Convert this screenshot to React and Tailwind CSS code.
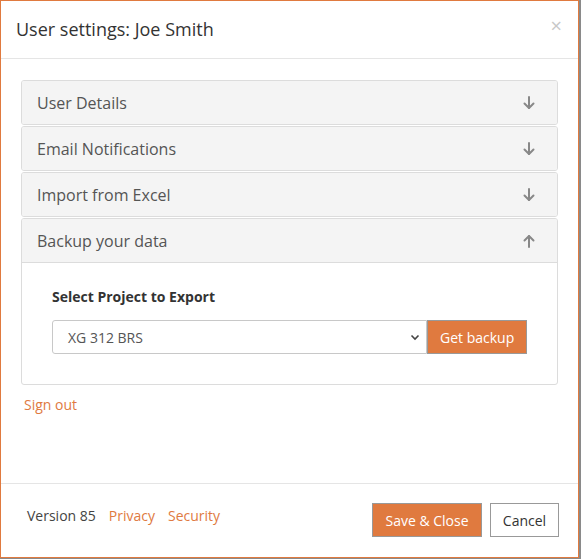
import React from "react";

function Arrow({ up }) {
  return (
    <svg width="14" height="16" viewBox="0 0 14 16" fill="none" stroke="#888" strokeWidth="2" strokeLinecap="round" strokeLinejoin="round">
      {up ? (
        <>
          <path d="M7 14V3" />
          <path d="M2.5 7.5L7 3l4.5 4.5" />
        </>
      ) : (
        <>
          <path d="M7 2v11" />
          <path d="M2.5 8.5L7 13l4.5-4.5" />
        </>
      )}
    </svg>
  );
}

function Item({ title, up, children }) {
  return (
    <div className="border border-[#dcdcdc] rounded-[3px] bg-white overflow-hidden">
      <div className="h-[43px] bg-[#f4f4f4] flex items-center justify-between pl-[15px] pr-[21px] text-[16px] text-[#555]">
        <span>{title}</span>
        <Arrow up={up} />
      </div>
      {children}
    </div>
  );
}

export default function App() {
  return (
    <div className="w-[581px] h-[559px] bg-[#8a8a8a]" style={{ fontFamily: '"Open Sans", sans-serif' }}>
      <div className="w-[579px] h-[558px] bg-white border border-[#e07a3f] flex flex-col">
        <div className="h-[58px] border-b border-[#e5e5e5] flex items-center justify-between pl-[15px] pr-[16px] shrink-0">
          <span className="text-[18px] text-[#333]">User settings: Joe Smith</span>
          <span className="text-[20px] text-[#c8c8c8] leading-none -mt-[8px]">×</span>
        </div>
        <div className="px-[20px] pt-[21px] flex-1">
          <div className="flex flex-col gap-[1px]">
            <Item title="User Details" />
            <Item title="Email Notifications" />
            <Item title="Import from Excel" />
            <Item title="Backup your data" up>
              <div className="border-t border-[#dcdcdc] px-[30px] pt-[23px] pb-[30px]">
                <div className="text-[14px] font-bold text-[#333] mb-[13px]">Select Project to Export</div>
                <div className="flex">
                  <div className="w-[376px] h-[34px] border border-[#c8c8c8] rounded-l-[3px] flex items-center justify-between pl-[15px] pr-[6px] text-[14px] text-[#555]">
                    <span>XG 312 BRS</span>
                    <svg width="10" height="8" viewBox="0 0 10 8" fill="none" stroke="#444" strokeWidth="1.6">
                      <path d="M1.5 2.5L5 6l3.5-3.5" />
                    </svg>
                  </div>
                  <div className="w-[100px] h-[34px] bg-[#e07a3f] border border-[#999] flex items-center justify-center text-[14px] text-white">
                    Get backup
                  </div>
                </div>
              </div>
            </Item>
          </div>
          <div className="mt-[9px] pl-[3px] text-[14px] text-[#e07a3f]">Sign out</div>
        </div>
        <div className="h-[74px] border-t border-[#e5e5e5] flex items-start justify-between pl-[26px] pr-[19px] pt-[19px] shrink-0">
          <div className="flex gap-[13px] text-[14px] pt-[2px]">
            <span className="text-[#444]">Version 85</span>
            <span className="text-[#e07a3f]">Privacy</span>
            <span className="text-[#e07a3f]">Security</span>
          </div>
          <div className="flex gap-[8px]">
            <div className="w-[110px] h-[34px] bg-[#e07a3f] border border-[#999] flex items-center justify-center text-[14px] text-white">
              Save &amp; Close
            </div>
            <div className="w-[69px] h-[34px] bg-white border border-[#999] flex items-center justify-center text-[14px] text-[#333]">
              Cancel
            </div>
          </div>
        </div>
      </div>
    </div>
  );
}
